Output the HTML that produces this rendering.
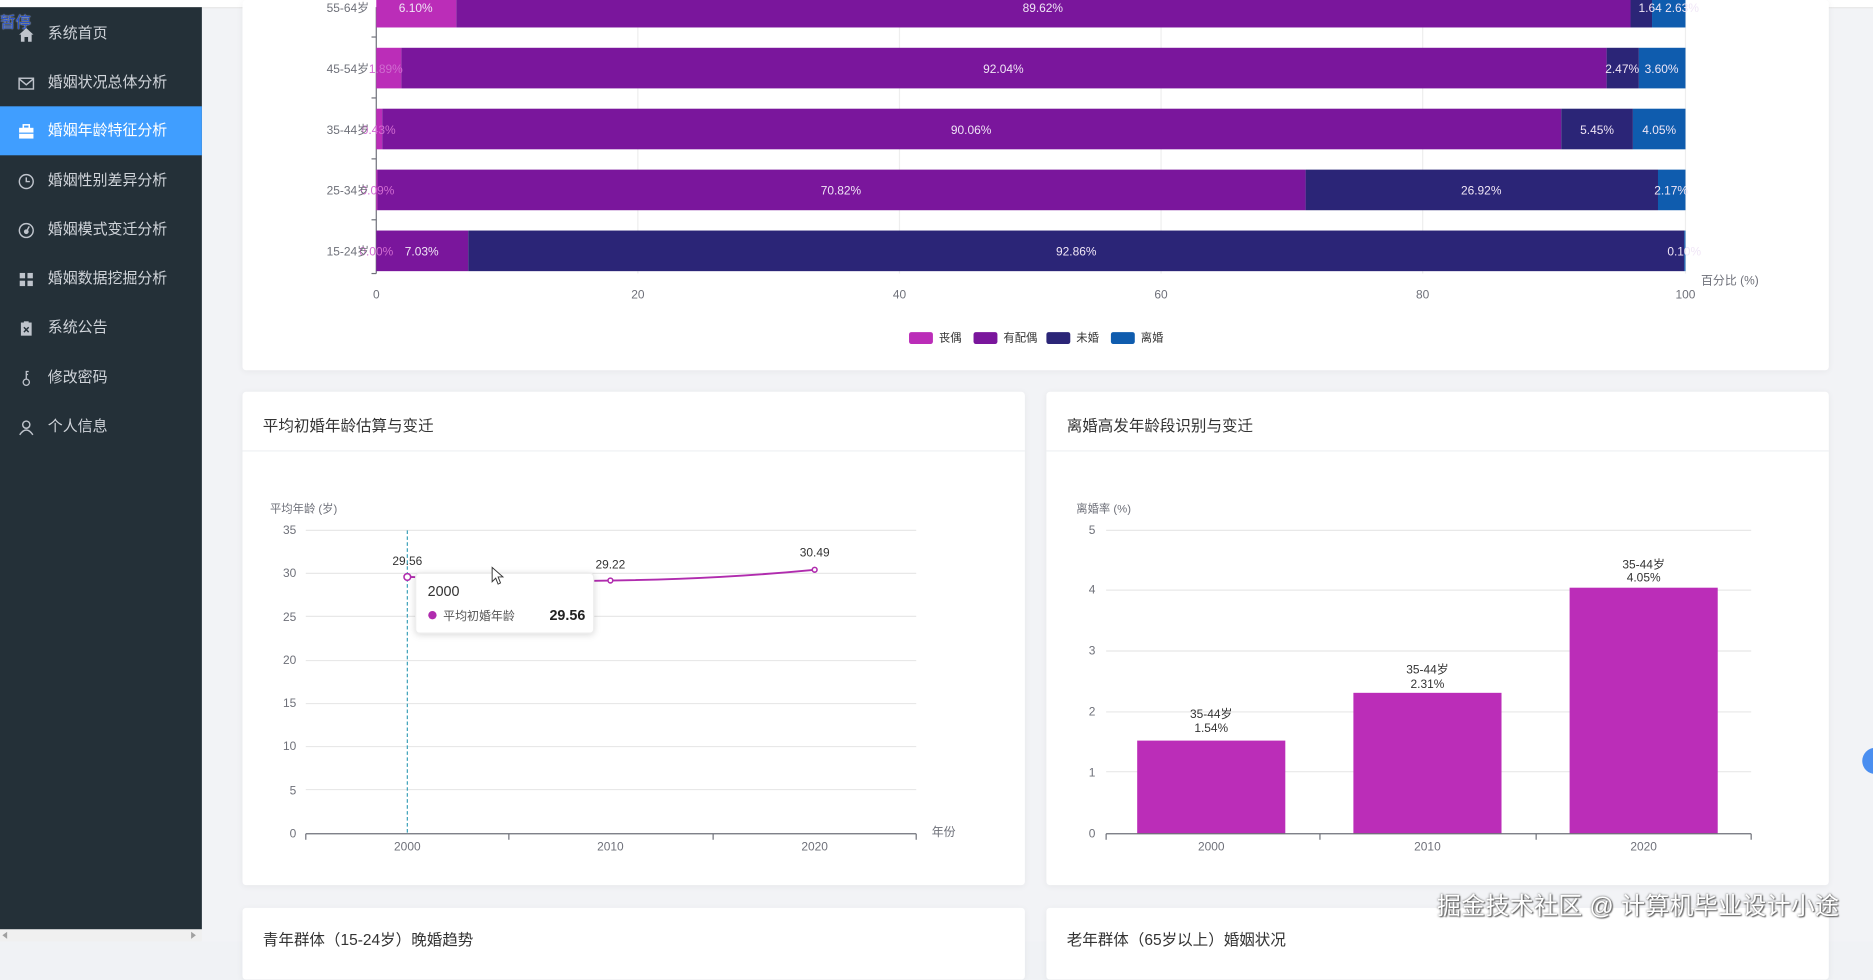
<!DOCTYPE html>
<html><head><meta charset="utf-8"><style>
html,body{margin:0;padding:0;width:1873px;height:941px;overflow:hidden;background:#f0f2f5;}
#w{position:absolute;left:0;top:0;width:1568px;height:788px;transform:scale(1.19452);transform-origin:0 0;font-family:"Liberation Sans","Noto Sans CJK SC",sans-serif;background:#f2f3f6;}
.sb{position:absolute;left:0;top:6px;width:169px;height:772px;background:#243038;}
.it{position:absolute;left:0;width:169px;height:41px;color:#d0d4da;font-size:12.5px;line-height:41px;}
.it span{position:absolute;left:40px;}
.it svg{position:absolute;left:15px;top:14px;}
.act{background:#409eff;color:#fff;}
.card{position:absolute;background:#fff;border-radius:3px;box-shadow:0 1px 6px rgba(0,0,0,0.05);}
.ttl{position:absolute;left:17px;top:18px;font-size:13px;color:#333;}
.hd{position:absolute;left:0;right:0;top:49px;height:1px;background:#eef0f3;}
svg text{font-family:"Liberation Sans","Noto Sans CJK SC",sans-serif;}
</style></head><body><div id="w">
<div style="position:absolute;left:0;top:0;width:1568px;height:6px;background:#fff;border-bottom:1px solid #e5e5e5"></div>
<div class="sb">
<div class="it" style="top:2px"><svg width="14" height="14" viewBox="0 0 14 14"><path d="M1 7 L7 1.5 L13 7 L11.5 7 L11.5 13 L8.5 13 L8.5 9 L5.5 9 L5.5 13 L2.5 13 L2.5 7Z" fill="#bfc4cc"/></svg><span>系统首页</span></div>
<div class="it" style="top:43px"><svg width="14" height="14" viewBox="0 0 14 14"><rect x="1" y="2.5" width="12" height="9" fill="none" stroke="#bfc4cc" stroke-width="1.2"/><path d="M1 3 L7 8 L13 3" fill="none" stroke="#bfc4cc" stroke-width="1.2"/></svg><span>婚姻状况总体分析</span></div>
<div class="it act" style="top:83px"><svg width="14" height="14" viewBox="0 0 14 14"><rect x="1" y="4" width="12" height="9" fill="#fff"/><rect x="4.5" y="1.5" width="5" height="3" fill="none" stroke="#fff" stroke-width="1.3"/><rect x="1" y="8" width="12" height="1" fill="#409eff"/></svg><span>婚姻年龄特征分析</span></div>
<div class="it" style="top:125px"><svg width="14" height="14" viewBox="0 0 14 14"><circle cx="7" cy="7" r="5.8" fill="none" stroke="#bfc4cc" stroke-width="1.2"/><path d="M7 3.5 V7 H10" fill="none" stroke="#bfc4cc" stroke-width="1.2"/></svg><span>婚姻性别差异分析</span></div>
<div class="it" style="top:166px"><svg width="14" height="14" viewBox="0 0 14 14"><circle cx="7" cy="7" r="5.8" fill="none" stroke="#bfc4cc" stroke-width="1.2"/><circle cx="7" cy="8" r="2" fill="#bfc4cc"/><path d="M7 8 L9.5 3.5" stroke="#bfc4cc" stroke-width="1.2"/></svg><span>婚姻模式变迁分析</span></div>
<div class="it" style="top:207px"><svg width="14" height="14" viewBox="0 0 14 14"><rect x="1.5" y="1.5" width="4.5" height="4.5" fill="#bfc4cc"/><rect x="8" y="1.5" width="4.5" height="4.5" fill="#bfc4cc"/><rect x="1.5" y="8" width="4.5" height="4.5" fill="#bfc4cc"/><rect x="8" y="8" width="4.5" height="4.5" fill="#bfc4cc"/></svg><span>婚姻数据挖掘分析</span></div>
<div class="it" style="top:248px"><svg width="14" height="14" viewBox="0 0 14 14"><rect x="2.5" y="2" width="9" height="11" fill="#bfc4cc"/><rect x="5" y="1" width="4" height="2" fill="#bfc4cc"/><path d="M5 6 L9 10 M9 6 L5 10" stroke="#243038" stroke-width="1.2"/></svg><span>系统公告</span></div>
<div class="it" style="top:290px"><svg width="14" height="14" viewBox="0 0 14 14"><circle cx="7" cy="10" r="2.6" fill="none" stroke="#bfc4cc" stroke-width="1.1"/><path d="M7 7.4 V1 H9 M7 3.5 H8.5" fill="none" stroke="#bfc4cc" stroke-width="1.1"/></svg><span>修改密码</span></div>
<div class="it" style="top:331px"><svg width="14" height="14" viewBox="0 0 14 14"><circle cx="7" cy="4.5" r="3" fill="none" stroke="#bfc4cc" stroke-width="1.2"/><path d="M1.5 13 Q7 5 12.5 13" fill="none" stroke="#bfc4cc" stroke-width="1.2"/></svg><span>个人信息</span></div>
</div>
<div style="position:absolute;left:0;top:778px;width:169px;height:10px;background:#f0f0f0"><div style="position:absolute;left:2px;top:2px;border:3px solid transparent;border-right:4px solid #a0a0a0;border-left:0"></div><div style="position:absolute;left:160px;top:2px;border:3px solid transparent;border-left:4px solid #a0a0a0;border-right:0"></div></div>
<div style="position:absolute;left:0;top:8px;font-size:13px;color:#2a52c8;text-shadow:0 0 1px #fff">暂停</div>

<div class="card" style="left:203px;top:0;width:1328px;height:310px"></div>
<div class="card" style="left:203px;top:328px;width:655px;height:413px"><div class="ttl">平均初婚年龄估算与变迁</div><div class="hd"></div></div>
<div class="card" style="left:876px;top:328px;width:655px;height:413px"><div class="ttl">离婚高发年龄段识别与变迁</div><div class="hd"></div></div>
<div class="card" style="left:203px;top:760px;width:655px;height:60px"><div class="ttl" style="top:16px">青年群体（15-24岁）晚婚趋势</div></div>
<div class="card" style="left:876px;top:760px;width:655px;height:60px"><div class="ttl" style="top:16px">老年群体（65岁以上）婚姻状况</div></div>

<svg style="position:absolute;left:0;top:0" width="1568" height="788" font-size="10">
<!-- bar chart -->
<g stroke="#eeeeee" stroke-width="1"><line x1="534" y1="6" x2="534" y2="229"/><line x1="753" y1="6" x2="753" y2="229"/><line x1="972" y1="6" x2="972" y2="229"/><line x1="1191" y1="6" x2="1191" y2="229"/><line x1="1411" y1="6" x2="1411" y2="229"/></g>
<line x1="315" y1="6" x2="315" y2="229" stroke="#6e7079"/>
<g stroke="#6e7079"><line x1="311" y1="31" x2="315" y2="31"/><line x1="311" y1="82" x2="315" y2="82"/><line x1="311" y1="133" x2="315" y2="133"/><line x1="311" y1="184" x2="315" y2="184"/><line x1="311" y1="229" x2="315" y2="229"/></g>
<g>
<rect x="315" y="0" width="67" height="23" fill="#bb2db8"/><rect x="382" y="0" width="983" height="23" fill="#7a169c"/><rect x="1365" y="0" width="18" height="23" fill="#2b2577"/><rect x="1383" y="0" width="28" height="23" fill="#0f5cae"/>
<rect x="315" y="40" width="21" height="34" fill="#bb2db8"/><rect x="336" y="40" width="1009" height="34" fill="#7a169c"/><rect x="1345" y="40" width="27" height="34" fill="#2b2577"/><rect x="1372" y="40" width="39" height="34" fill="#0f5cae"/>
<rect x="315" y="91" width="5" height="34" fill="#bb2db8"/><rect x="320" y="91" width="987" height="34" fill="#7a169c"/><rect x="1307" y="91" width="60" height="34" fill="#2b2577"/><rect x="1367" y="91" width="44" height="34" fill="#0f5cae"/>
<rect x="315" y="142" width="1" height="34" fill="#bb2db8"/><rect x="316" y="142" width="777" height="34" fill="#7a169c"/><rect x="1093" y="142" width="295" height="34" fill="#2b2577"/><rect x="1388" y="142" width="23" height="34" fill="#0f5cae"/>
<rect x="315" y="193" width="77" height="34" fill="#7a169c"/><rect x="392" y="193" width="1018" height="34" fill="#2b2577"/><rect x="1410" y="193" width="1" height="34" fill="#0f5cae"/>
</g>
<g fill="#f0e6f6" text-anchor="middle">
<text x="348" y="10">6.10%</text><text x="873" y="10">89.62%</text><text x="1397" y="10">1.64 2.63%</text>
<text x="840" y="61">92.04%</text><text x="1358" y="61">2.47%</text><text x="1391" y="61">3.60%</text>
<text x="813" y="112">90.06%</text><text x="1337" y="112">5.45%</text><text x="1389" y="112">4.05%</text>
<text x="704" y="163">70.82%</text><text x="1240" y="163">26.92%</text><text x="1399" y="163">2.17%</text>
<text x="353" y="214">7.03%</text><text x="901" y="214">92.86%</text><text x="1410" y="214">0.10%</text>
</g>
<g fill="#d06cd0" text-anchor="middle"><text x="323" y="61">1.89%</text><text x="317" y="112">0.43%</text><text x="316" y="163">0.09%</text><text x="315" y="214">0.00%</text></g>
<g fill="#6e7079" text-anchor="end"><text x="309" y="10">55-64岁</text><text x="309" y="61">45-54岁</text><text x="309" y="112">35-44岁</text><text x="309" y="163">25-34岁</text><text x="309" y="214">15-24岁</text></g>
<g fill="#6e7079" text-anchor="middle"><text x="315" y="250">0</text><text x="534" y="250">20</text><text x="753" y="250">40</text><text x="972" y="250">60</text><text x="1191" y="250">80</text><text x="1411" y="250">100</text></g>
<text x="1424" y="238" fill="#6e7079">百分比 (%)</text>
<g font-size="9.5" fill="#333"><rect x="761" y="278" width="20" height="10" rx="2" fill="#bb2db8"/><text x="786" y="286">丧偶</text><rect x="815" y="278" width="20" height="10" rx="2" fill="#7a169c"/><text x="840" y="286">有配偶</text><rect x="876" y="278" width="20" height="10" rx="2" fill="#2b2577"/><text x="901" y="286">未婚</text><rect x="930" y="278" width="20" height="10" rx="2" fill="#0f5cae"/><text x="955" y="286">离婚</text></g>

<!-- line chart -->
<text x="226" y="429" fill="#6e7079" font-size="9.5">平均年龄 (岁)</text>
<g stroke="#e8e8e8"><line x1="256" y1="444" x2="767" y2="444"/><line x1="256" y1="480" x2="767" y2="480"/><line x1="256" y1="516" x2="767" y2="516"/><line x1="256" y1="553" x2="767" y2="553"/><line x1="256" y1="589" x2="767" y2="589"/><line x1="256" y1="625" x2="767" y2="625"/><line x1="256" y1="661" x2="767" y2="661"/></g>
<line x1="256" y1="698" x2="767" y2="698" stroke="#6e7079"/>
<g stroke="#6e7079"><line x1="256" y1="698" x2="256" y2="703"/><line x1="426" y1="698" x2="426" y2="703"/><line x1="597" y1="698" x2="597" y2="703"/><line x1="767" y1="698" x2="767" y2="703"/></g>
<g fill="#6e7079" text-anchor="end"><text x="248" y="447">35</text><text x="248" y="483">30</text><text x="248" y="520">25</text><text x="248" y="556">20</text><text x="248" y="592">15</text><text x="248" y="628">10</text><text x="248" y="665">5</text><text x="248" y="701">0</text></g>
<g fill="#6e7079" text-anchor="middle"><text x="341" y="712">2000</text><text x="511" y="712">2010</text><text x="682" y="712">2020</text></g>
<text x="780" y="700" fill="#6e7079">年份</text>
<line x1="341" y1="444" x2="341" y2="698" stroke="#3aa0b8" stroke-dasharray="3,2"/>
<path d="M341 483 C420 485 460 487 511 486 C580 485 630 482 682 477" fill="none" stroke="#b02cae" stroke-width="1.6"/>
<g fill="#fff" stroke="#b02cae" stroke-width="1.3"><circle cx="341" cy="483" r="2.8"/><circle cx="511" cy="486" r="2"/><circle cx="682" cy="477" r="2"/></g>
<g fill="#333" text-anchor="middle"><text x="341" y="473">29.56</text><text x="511" y="476">29.22</text><text x="682" y="466">30.49</text></g>
<rect x="348" y="480" width="149" height="50" rx="3" fill="#fff" stroke="#eee" style="filter:drop-shadow(0 1px 3px rgba(0,0,0,0.15))"/>
<text x="358" y="499" font-size="12" fill="#333">2000</text>
<circle cx="362" cy="515" r="3.5" fill="#b02cae"/>
<text x="371" y="519" font-size="10" fill="#555">平均初婚年龄</text>
<text x="490" y="519" font-size="12" font-weight="bold" fill="#222" text-anchor="end">29.56</text>
<path d="M412 475 L412 487 L415 484 L417 489 L419 488 L417 483 L421 483Z" fill="#fff" stroke="#333" stroke-width="0.8"/>

<!-- bar chart 2 -->
<text x="901" y="429" fill="#6e7079" font-size="9.5">离婚率 (%)</text>
<g stroke="#e8e8e8"><line x1="926" y1="444" x2="1466" y2="444"/><line x1="926" y1="494" x2="1466" y2="494"/><line x1="926" y1="545" x2="1466" y2="545"/><line x1="926" y1="596" x2="1466" y2="596"/><line x1="926" y1="646" x2="1466" y2="646"/></g>
<g fill="#bb2db8"><rect x="952" y="620" width="124" height="78"/><rect x="1133" y="580" width="124" height="118"/><rect x="1314" y="492" width="124" height="206"/></g>
<line x1="926" y1="698" x2="1466" y2="698" stroke="#6e7079"/>
<g stroke="#6e7079"><line x1="926" y1="698" x2="926" y2="703"/><line x1="1105" y1="698" x2="1105" y2="703"/><line x1="1286" y1="698" x2="1286" y2="703"/><line x1="1466" y1="698" x2="1466" y2="703"/></g>
<g fill="#6e7079" text-anchor="end"><text x="917" y="447">5</text><text x="917" y="497">4</text><text x="917" y="548">3</text><text x="917" y="599">2</text><text x="917" y="650">1</text><text x="917" y="701">0</text></g>
<g fill="#6e7079" text-anchor="middle"><text x="1014" y="712">2000</text><text x="1195" y="712">2010</text><text x="1376" y="712">2020</text></g>
<g fill="#333" text-anchor="middle"><text x="1014" y="601">35-44岁</text><text x="1014" y="613">1.54%</text><text x="1195" y="564">35-44岁</text><text x="1195" y="576">2.31%</text><text x="1376" y="476">35-44岁</text><text x="1376" y="487">4.05%</text></g>
<circle cx="1570" cy="637" r="11" fill="#4a8ef0"/>
</svg>
<div style="position:absolute;left:1203px;top:742px;font-size:20px;color:#fff;letter-spacing:0.3px;text-shadow:0 0 2px #555,1px 1px 1px #666;font-family:'Liberation Sans','Noto Sans CJK SC',sans-serif">掘金技术社区 @ 计算机毕业设计小途</div>
</div></body></html>
